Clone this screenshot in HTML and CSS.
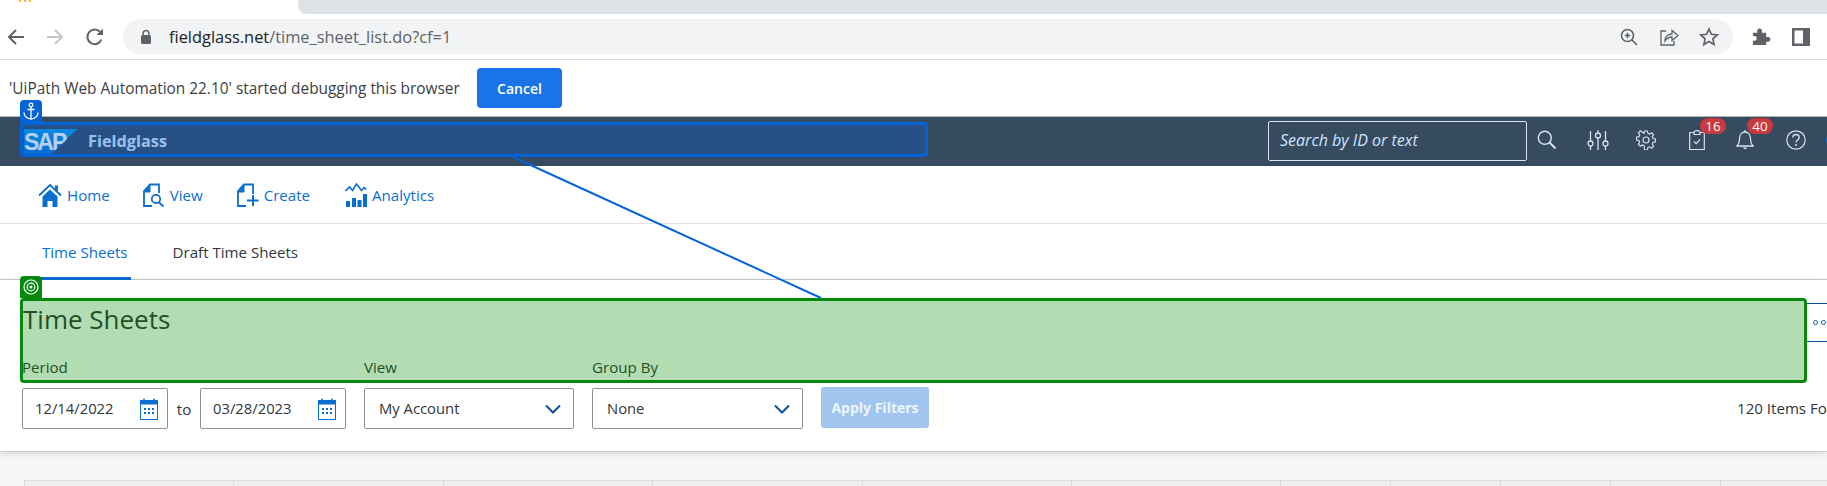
FILE: index.html
```html
<!DOCTYPE html>
<html lang="en">
<head>
    <meta charset="UTF-8">
    <meta name="viewport" content="width=device-width, initial-scale=1.0">
    <title>Time Sheets</title>
    <link rel="stylesheet" href="styles.css">
</head>
<body>
    <!-- browser chrome -->
    <div class="tabstrip">
        <div class="tab-favicon"></div>
        <div class="tab-rest"></div>
    </div>
    <div class="toolbar">
        <svg class="tool-icon" width="20" height="20" viewBox="0 0 20 20"><path d="M18 10H3M10 3l-7 7 7 7" fill="none" stroke="#5f6368" stroke-width="2"/></svg>
        <svg class="tool-icon fwd" width="20" height="20" viewBox="0 0 20 20"><path d="M2 10h15M10 3l7 7-7 7" fill="none" stroke="#c4c6c9" stroke-width="2"/></svg>
        <svg class="tool-icon reload" width="20" height="20" viewBox="0 0 20 20"><path d="M16.5 12.5A7.3 7.3 0 1 1 15 4.8" fill="none" stroke="#5f6368" stroke-width="2"/><path d="M18 1.5V8h-6.5z" fill="#5f6368"/></svg>
        <div class="omnibox">
            <svg width="12" height="16" viewBox="0 0 12 16"><rect x="1" y="6" width="10" height="9" rx="1.5" fill="#5f6368"/><path d="M3.2 6V4.2a2.8 2.8 0 0 1 5.6 0V6" fill="none" stroke="#5f6368" stroke-width="1.5"/></svg>
            <div class="url"><span class="url-host">fieldglass.net</span>/time_sheet_list.do?cf=1</div>
            <div class="omni-actions">
                <svg width="20" height="20" viewBox="0 0 20 20"><circle cx="8.5" cy="8.5" r="6" fill="none" stroke="#5f6368" stroke-width="1.6"/><path d="M13 13l5 5M8.5 5.8v5.4M5.8 8.5h5.4" stroke="#5f6368" stroke-width="1.6"/></svg>
                <svg width="20" height="20" viewBox="0 0 20 20"><path d="M7 4H2v14h13v-4" fill="none" stroke="#5f6368" stroke-width="1.3"/><path d="M6 14c0-5 3-7 7-7V3.500l6 5-6 5V10c-3 0-5 1-7 4z" fill="none" stroke="#5f6368" stroke-width="1.3"/></svg>
                <svg width="20" height="20" viewBox="0 0 20 20"><path d="M10 2l2.400 5.300 5.800.6-4.300 3.900 1.200 5.700L10 14.600l-5.100 2.900 1.200-5.700L1.800 7.900l5.800-.6z" fill="none" stroke="#5f6368" stroke-width="1.700"/></svg>
            </div>
        </div>
        <svg class="ext-icon" width="20" height="20" viewBox="0 0 20 20"><path d="M2 6h4.500V4a2.500 2.500 0 0 1 5 0v2H16v4.500h2a2.500 2.500 0 0 1 0 5h-2V19H2v-4.500h1.500a2.500 2.500 0 0 0 0-5H2z" fill="#5f6368" transform="scale(.95)"/></svg>
        <svg class="side-icon" width="18" height="20" viewBox="0 0 18 20"><path d="M0 1h18v18H0zM2.500 3.500v13H11v-13z" fill="#5f6368" fill-rule="evenodd"/></svg>
    </div>
    <div class="infobar">
        <span class="info-text">'UiPath Web Automation 22.10' started debugging this browser</span>
        <button class="cancel-btn">Cancel</button>
    </div>

    <!-- app header -->
    <header class="app-header">
        <div class="brand">
            <div class="sap-logo"><span>SAP</span></div>
            <span class="brand-name">Fieldglass</span>
        </div>
        <div class="search-box">Search by ID or text</div>
        <div class="head-icons">
            <svg class="hi-search" width="20" height="20" viewBox="0 0 20 20"><circle cx="7.800" cy="7.800" r="6.500" fill="none" stroke="#d5e4f3" stroke-width="1.400"/><path d="M12.500 12.500l6 6" stroke="#d5e4f3" stroke-width="2"/></svg>
            <svg class="hi-sliders" width="22" height="20" viewBox="0 0 22 20"><g fill="none" stroke="#d5e4f3" stroke-width="1.300"><path d="M3.500 1v10M3.500 16v4M11 0v3M11 8v12M18.500 1v10M18.500 16v4"/><circle cx="3.500" cy="13.500" r="2.500"/><circle cx="11" cy="5.500" r="2.500"/><circle cx="18.500" cy="13.500" r="2.500"/></g></svg>
            <svg class="hi-gear" width="20" height="20" viewBox="0 0 20 20"><g fill="none" stroke="#d5e4f3" stroke-width="1.200"><circle cx="10" cy="10" r="3"/><path d="M8.500 1h3l.5 2.500 1.800.8 2.200-1.400 2 2.100-1.400 2.200.8 1.800 2.600.5v3l-2.600.5-.8 1.800 1.400 2.200-2 2.100-2.200-1.400-1.800.8-.5 2.500h-3L8 16.500l-1.800-.8L4 17.100 2 15l1.400-2.200-.8-1.800L0 10.500v-3l2.600-.5.8-1.800L2 3l2-2.100 2.200 1.400L8 3.500z" transform="translate(.5 0) scale(.95)"/></g></svg>
            <div class="hi-badged hi-clip">
                <svg width="16" height="20" viewBox="0 0 16 20"><path d="M5 2.500H.7v17h14.600v-17H11M5 4.500V2.500C5 1 6.500.600 8 .600s3 .400 3 1.900v2z" fill="none" stroke="#d5e4f3" stroke-width="1.200"/><path d="M5 11.500l2.200 2.200L11 9.500" fill="none" stroke="#d5e4f3" stroke-width="1.200"/></svg>
                <span class="badge">16</span>
            </div>
            <div class="hi-badged hi-bell">
                <svg width="18" height="20" viewBox="0 0 18 20"><path d="M1 16c2-2 2.500-3.500 2.500-7C3.500 4.500 6 2 9 2s5.500 2.500 5.500 7c0 3.500.5 5 2.500 7z" fill="none" stroke="#d5e4f3" stroke-width="1.300"/><path d="M6.500 17.500h5L9 19.500z" fill="#d5e4f3"/><path d="M9 0v2" stroke="#d5e4f3" stroke-width="1.300"/></svg>
                <span class="badge">40</span>
            </div>
            <svg class="hi-help" width="20" height="20" viewBox="0 0 20 20"><circle cx="10" cy="10" r="9.200" fill="none" stroke="#d5e4f3" stroke-width="1.200"/><path d="M6.800 7.500C6.800 5.500 8.300 4.500 10 4.500s3.200 1 3.200 3c0 2.500-3.200 2.700-3.200 5" fill="none" stroke="#d5e4f3" stroke-width="1.300"/><circle cx="10" cy="15" r="1" fill="#d5e4f3"/></svg>
            <div class="avatar"></div>
        </div>
    </header>

    <nav class="main-nav">
        <a class="nav-item nav-home">
            <svg width="24" height="24" viewBox="0 0 24 24"><path d="M1 12.500L12 2l11 10.500" fill="none" stroke="#0a6ed1" stroke-width="1.800"/><path d="M17 2.500h3v6l-3-3z" fill="#0a6ed1"/><path d="M4.500 13.500L12 6.500l7.500 7V24H14.500v-6h-5v6h-5z" fill="#0a6ed1"/></svg>
            Home
        </a>
        <a class="nav-item nav-view">
            <svg width="22" height="24" viewBox="0 0 22 24"><path d="M9 23H1V8l6-6.500h9V10" fill="none" stroke="#0a6ed1" stroke-width="1.800"/><path d="M7 2v7H1" fill="#0a6ed1" stroke="#0a6ed1"/><circle cx="13" cy="16" r="4.200" fill="none" stroke="#0a6ed1" stroke-width="1.800"/><path d="M16 19.500l4.500 4" stroke="#0a6ed1" stroke-width="2"/></svg>
            View
        </a>
        <a class="nav-item nav-create">
            <svg width="22" height="24" viewBox="0 0 22 24"><path d="M9 23H1V8l6-6.500h9V11" fill="none" stroke="#0a6ed1" stroke-width="1.800"/><path d="M7 2v7H1" fill="#0a6ed1" stroke="#0a6ed1"/><path d="M16 12v11M10 17.500h11.500" stroke="#0a6ed1" stroke-width="2"/></svg>
            Create
        </a>
        <a class="nav-item nav-analytics">
            <svg width="22" height="24" viewBox="0 0 22 24"><path d="M.5 8l4-4 3 3.500L11.500 1l5 6.500 2.500-3 2.500 2" fill="none" stroke="#0a6ed1" stroke-width="1.600"/><path d="M1 18h4v6H1zM7 15h4v9H7zM12.500 17h4v7h-4zM18 11h4v13h-4z" fill="#0a6ed1"/></svg>
            Analytics
        </a>
    </nav>

    <div class="sub-tabs">
        <a class="sub-tab active">Time Sheets</a>
        <a class="sub-tab">Draft Time Sheets</a>
    </div>

    <main class="content-card">
        <div class="title-row">
            <h1 class="page-title">Time Sheets</h1>
            <button class="more-btn"><i></i><i></i></button>
        </div>
        <div class="filters">
            <div class="filter filter-period">
                <label>Period</label>
                <div class="period-fields">
                    <div class="field date-field">12/14/2022
                        <svg width="18" height="22" viewBox="0 0 18 22"><rect x=".5" y="2.500" width="17" height="19" fill="#fff" stroke="#0a6ed1"/><path d="M0 2h18v4.500H0z" fill="#0a6ed1"/><path d="M4 .500v2M14 .500v2" stroke="#0a6ed1" stroke-width="1.500"/><path d="M4 10h2v2H4zM8 10h2v2H8zM12 10h2v2h-2zM4 14h2v2H4zM8 14h2v2H8zM12 14h2v2h-2z" fill="#0a6ed1"/></svg>
                    </div>
                    <span class="to-label">to</span>
                    <div class="field date-field">03/28/2023
                        <svg width="18" height="22" viewBox="0 0 18 22"><rect x=".5" y="2.500" width="17" height="19" fill="#fff" stroke="#0a6ed1"/><path d="M0 2h18v4.500H0z" fill="#0a6ed1"/><path d="M4 .500v2M14 .500v2" stroke="#0a6ed1" stroke-width="1.500"/><path d="M4 10h2v2H4zM8 10h2v2H8zM12 10h2v2h-2zM4 14h2v2H4zM8 14h2v2H8zM12 14h2v2h-2z" fill="#0a6ed1"/></svg>
                    </div>
                </div>
            </div>
            <div class="filter">
                <label>View</label>
                <div class="field select-field view-select">My Account
                    <svg width="16" height="10" viewBox="0 0 16 10"><path d="M1 1.500l7 7 7-7" fill="none" stroke="#0b4f9e" stroke-width="2"/></svg>
                </div>
            </div>
            <div class="filter">
                <label>Group By</label>
                <div class="field select-field group-select">None
                    <svg width="16" height="10" viewBox="0 0 16 10"><path d="M1 1.500l7 7 7-7" fill="none" stroke="#0b4f9e" stroke-width="2"/></svg>
                </div>
            </div>
            <button class="apply-btn">Apply Filters</button>
            <span class="items-found">120 Items Fo</span>
        </div>
    </main>

    <section class="table-area">
        <div class="table-head">
            <div></div><div></div><div></div><div></div><div></div><div></div>
            <div></div><div></div><div></div><div></div><div></div>
        </div>
    </section>

    <!-- debugger selection overlays -->
    <div class="pick pick-anchor">
        <div class="pick-tab">
            <svg width="16" height="18" viewBox="0 0 16 18"><g fill="none" stroke="#fff" stroke-width="1.300"><circle cx="8" cy="3" r="1.800"/><path d="M8 5v12M4.500 7.500h7M1 10.500c0 4 3.500 6 7 6.500 3.500-.5 7-2.500 7-6.500"/></g></svg>
        </div>
    </div>
    <div class="pick pick-target">
        <div class="pick-tab">
            <svg width="16" height="16" viewBox="0 0 16 16"><g fill="none" stroke="#fff" stroke-width="1.200"><circle cx="8" cy="8" r="7"/><circle cx="8" cy="8" r="3.800"/></g><circle cx="8" cy="8" r="1.500" fill="#fff"/></svg>
        </div>
    </div>
    <svg class="pick-line" width="1827" height="486" viewBox="0 0 1827 486"><line x1="513" y1="157" x2="821" y2="298" stroke="#0563d8" stroke-width="2"/></svg>
</body>
</html>
```

FILE: styles.css
```css
html, body {
    margin: 0;
    padding: 0;
    height: 486px;
    overflow: hidden;
}

body {
    position: relative;
    width: 1827px;
    font-family: "Open Sans", "Noto Sans", Arial, sans-serif;
    font-size: 15.1px;
    color: #32363a;
    background-color: #fff;
}

button {
    font-family: inherit;
    border: none;
}

/* browser chrome */
.tabstrip {
    display: flex;
    height: 19px;
}

.tab-favicon {
    width: 14px;
    height: 2px;
    margin-left: 19px;
    background: repeating-linear-gradient(90deg, #f7b733 0 2px, transparent 2px 5px);
}

.tab-rest {
    flex: 1;
    height: 14px;
    margin-left: 265px;
    background-color: #dee1e6;
    border-bottom-left-radius: 8px;
}

.toolbar {
    display: flex;
    align-items: center;
    height: 41px;
    padding: 0 0 5px 6px;
    box-sizing: border-box;
    border-bottom: 1px solid #dcdcdc;
}

.tool-icon.fwd {
    margin-left: 19px;
}

.tool-icon.reload {
    margin-left: 20px;
}

.omnibox {
    display: flex;
    align-items: center;
    flex-shrink: 0;
    width: 1610px;
    height: 35px;
    margin-left: 18px;
    padding-left: 17px;
    box-sizing: border-box;
    background-color: #f1f3f4;
    border-radius: 18px;
}

.url {
    margin-left: 17px;
    font-size: 16.4px;
    color: #5f6368;
}

.url-host {
    color: #202124;
}

.omni-actions {
    display: flex;
    gap: 20px;
    margin-left: auto;
    margin-right: 14px;
}

.ext-icon {
    margin-left: 18px;
}

.side-icon {
    margin-left: 21px;
}

.infobar {
    display: flex;
    align-items: center;
    height: 56px;
    padding: 0 0 0 9px;
    box-sizing: border-box;
}

.info-text {
    width: 468px;
    font-size: 15.4px;
    color: #3c4043;
    white-space: nowrap;
}

.cancel-btn {
    width: 85px;
    height: 40px;
    background-color: #1a73e8;
    color: #fff;
    font-size: 14px;
    font-weight: 600;
    border-radius: 4px;
}

/* app header */
.app-header {
    display: flex;
    align-items: center;
    height: 50px;
    box-sizing: border-box;
    border-top: 1px solid #b5b5b5;
    background-color: #364a60;
    overflow: hidden;
}

.brand {
    display: flex;
    align-items: center;
    flex-shrink: 0;
    width: 1268px;
    padding-left: 24px;
    box-sizing: border-box;
}

.sap-logo {
    width: 54px;
    height: 26px;
    background: linear-gradient(#0a9be0, #0a6ed1);
    clip-path: polygon(0 0, 100% 0, 50% 100%, 0 100%);
}

.sap-logo span {
    display: block;
    font-family: "Liberation Sans", Arial, sans-serif;
    font-size: 23px;
    font-weight: 700;
    line-height: 26px;
    letter-spacing: -2px;
    color: #fff;
}

.brand-name {
    margin-left: 10px;
    margin-bottom: 2px;
    font-size: 16.3px;
    font-weight: 700;
    color: #d8e8fa;
}

.search-box {
    flex-shrink: 0;
    width: 259px;
    height: 40px;
    margin-top: -1px;
    padding-left: 11px;
    box-sizing: border-box;
    line-height: 36px;
    font-size: 16px;
    font-style: italic;
    color: #cfe6ff;
    border: 1px solid #d5e4f3;
    border-radius: 2px;
}

.head-icons {
    display: flex;
    align-items: center;
    flex: 1;
    height: 100%;
    padding-bottom: 3px;
    box-sizing: border-box;
}

.hi-search { margin-left: 10px; }
.hi-sliders { margin-left: 30px; }
.hi-gear { margin-left: 27px; }
.hi-clip { margin-left: 33px; }
.hi-bell { margin-left: 31px; }
.hi-help { margin-left: 32px; }

.hi-badged {
    position: relative;
    display: flex;
}

.badge {
    position: absolute;
    top: -12px;
    left: 11px;
    width: 26px;
    height: 16px;
    line-height: 16px;
    text-align: center;
    font-size: 13.5px;
    color: #fff;
    background-color: #c93a3f;
    border-radius: 8px;
}

.avatar {
    width: 20px;
    height: 20px;
    margin-left: 20px;
    flex-shrink: 0;
    background-color: #0a6ed1;
    border-radius: 50%;
}

/* nav */
.main-nav {
    display: flex;
    align-items: center;
    height: 58px;
    box-sizing: border-box;
    padding-left: 38px;
    border-bottom: 1px solid #e4e4e4;
}

.nav-item {
    display: flex;
    align-items: center;
    gap: 5px;
    color: #0a6ed1;
}

.nav-view { margin-left: 33px; }
.nav-create { margin-left: 34px; }
.nav-analytics { margin-left: 35px; }

.sub-tabs {
    display: flex;
    height: 56px;
    padding-left: 24px;
    box-sizing: border-box;
    border-bottom: 1px solid #c8c8c8;
}

.sub-tab {
    height: 56px;
    line-height: 57px;
    padding: 0 3px 0 18px;
    margin-right: 24px;
    box-sizing: border-box;
}

.sub-tab.active {
    color: #0a6ed1;
    border-bottom: 3px solid #0a6ed1;
}

/* main content */
.content-card {
    height: 172px;
    box-sizing: border-box;
    border-bottom: 1px solid #ccc;
    box-shadow: 0 2px 6px rgba(0, 0, 0, .12);
    position: relative;
}

.title-row {
    display: flex;
    align-items: center;
    justify-content: space-between;
    height: 39px;
    padding: 23px 0 0 23px;
}

.page-title {
    margin: 0 0 7px;
    font-size: 26px;
    font-weight: 400;
}

.more-btn {
    display: flex;
    align-items: center;
    gap: 3px;
    width: 20px;
    height: 39px;
    padding: 0 0 0 6px;
    box-sizing: border-box;
    background-color: #fff;
    border-top: 1px solid #0b4f9e;
    border-bottom: 1px solid #0b4f9e;
}

.more-btn i {
    flex-shrink: 0;
    width: 5px;
    height: 5px;
    box-sizing: border-box;
    border: 1.500px solid #0b5fb0;
    border-radius: 50%;
}

.filters {
    display: flex;
    align-items: flex-end;
    gap: 18px;
    margin-top: 15px;
    padding-left: 22px;
}

.filters > * {
    flex-shrink: 0;
}

.filter label {
    display: block;
    height: 31px;
    line-height: 21px;
}

.period-fields {
    display: flex;
    align-items: center;
}

.to-label {
    width: 32px;
    text-align: center;
}

.field {
    display: flex;
    align-items: center;
    justify-content: space-between;
    height: 41px;
    padding-bottom: 2px;
    box-sizing: border-box;
    font-size: 14.8px;
    background-color: #fff;
    border: 1px solid #89919a;
    border-radius: 2px;
}

.field svg {
    margin-top: 2px;
}

.date-field {
    width: 146px;
    padding-left: 12px;
    padding-right: 9px;
}

.select-field {
    padding-left: 14px;
    padding-right: 12px;
}

.view-select {
    width: 210px;
}

.group-select {
    width: 211px;
}

.apply-btn {
    width: 108px;
    height: 41px;
    margin-bottom: 1px;
    padding: 0;
    white-space: nowrap;
    background-color: #a0c5ee;
    color: #eef5fd;
    font-size: 14px;
    font-weight: 700;
    border-radius: 3px;
}

.items-found {
    height: 41px;
    line-height: 41px;
    margin-left: 790px;
    white-space: nowrap;
}

/* table stub */
.table-area {
    height: 34px;
    padding: 28px 0 0 24px;
    box-sizing: border-box;
    background-color: #f6f6f6;
}

.table-head {
    display: grid;
    grid-template-columns: repeat(6, 209.4px) repeat(5, 110px);
    height: 6px;
    background-color: #f1f1f1;
    border-top: 1px solid #dedede;
}

.table-head div {
    border-left: 1px solid #dedede;
}

/* debugger overlays */
.pick {
    position: absolute;
    box-sizing: border-box;
    border-radius: 4px;
}

.pick-anchor {
    left: 20px;
    top: 122px;
    width: 908px;
    height: 35px;
    background-color: rgba(5, 100, 216, .3);
    border: 3px solid #0563d8;
}

.pick-target {
    left: 20px;
    top: 298px;
    width: 1787px;
    height: 85px;
    background-color: rgba(0, 140, 0, .3);
    border: 3px solid #068a0e;
}

.pick-tab {
    position: absolute;
    left: -3px;
    bottom: calc(100% + 3px);
    display: flex;
    align-items: center;
    justify-content: center;
    width: 22px;
    height: 22px;
    border-radius: 4px 4px 0 0;
}

.pick-anchor .pick-tab {
    background-color: #0563d8;
}

.pick-target .pick-tab {
    background-color: #068a0e;
}

.pick-line {
    position: absolute;
    left: 0;
    top: 0;
    pointer-events: none;
}
```
